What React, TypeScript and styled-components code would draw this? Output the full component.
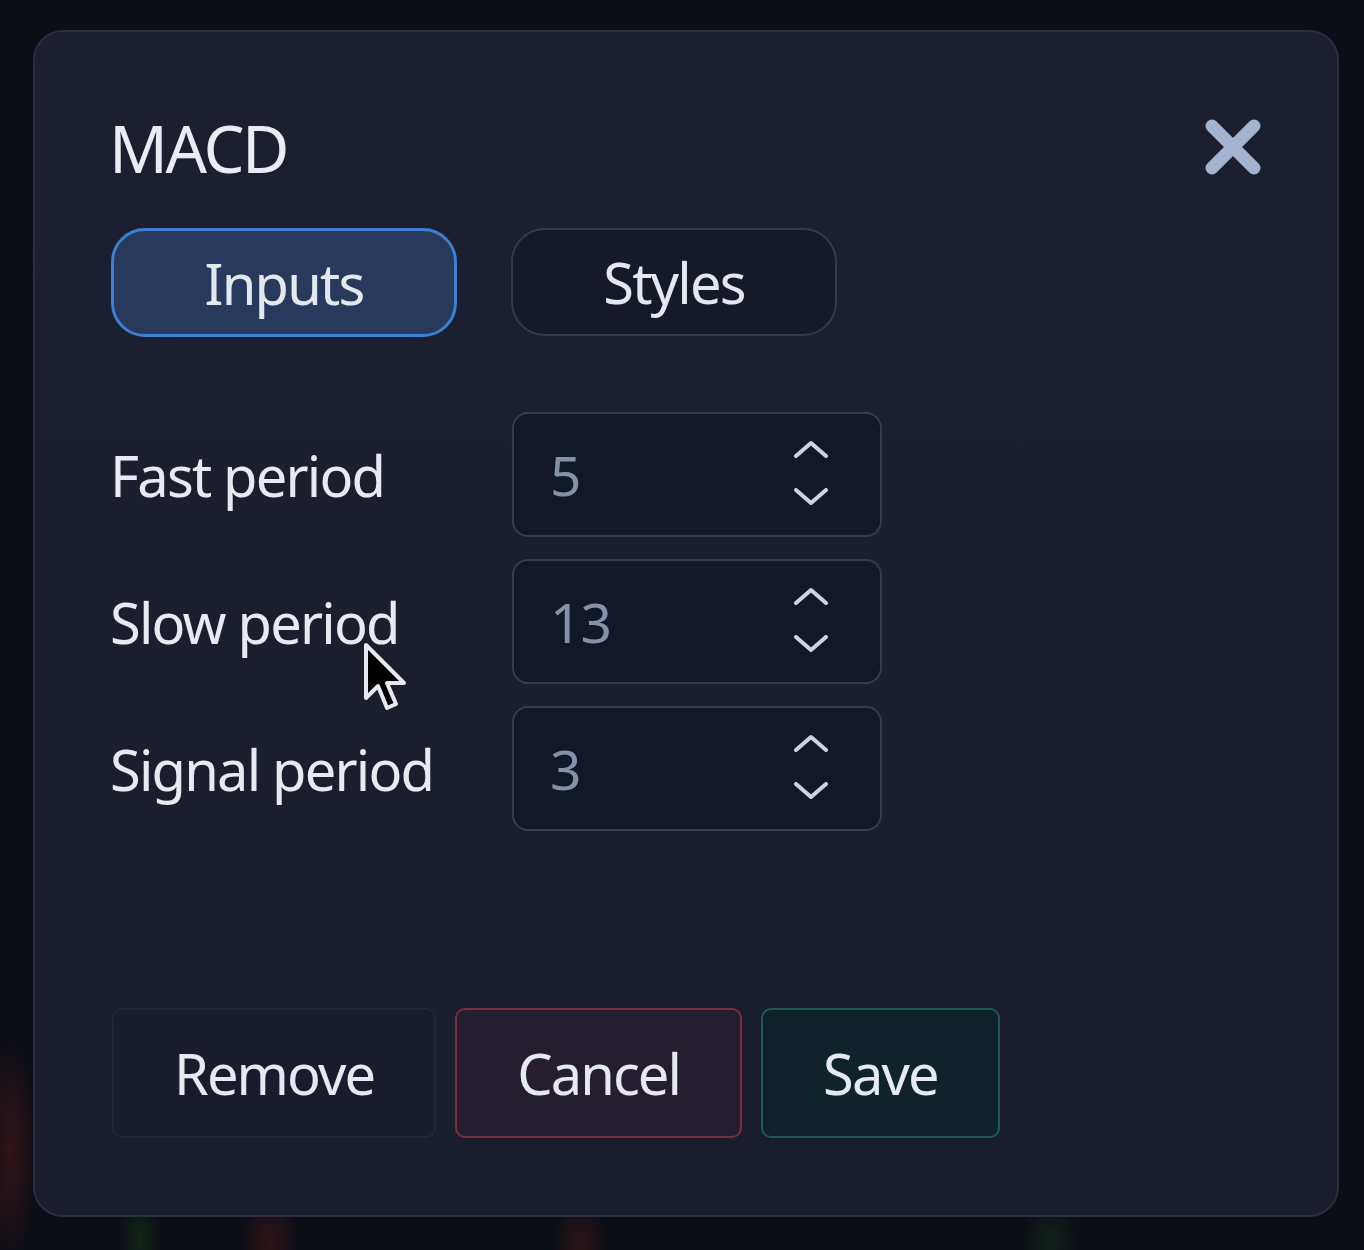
import React from "react";
import styled, { createGlobalStyle } from "styled-components";

const Global = createGlobalStyle`
  html, body { margin: 0; padding: 0; }
  body {
    width: 1364px;
    height: 1250px;
    overflow: hidden;
    background:
      radial-gradient(ellipse 40px 160px at 10px 1150px, rgba(120, 30, 30, 0.35), transparent 70%),
      radial-gradient(ellipse 30px 80px at 140px 1240px, rgba(40, 110, 40, 0.25), transparent 70%),
      radial-gradient(ellipse 40px 80px at 270px 1245px, rgba(130, 35, 30, 0.3), transparent 70%),
      radial-gradient(ellipse 40px 60px at 580px 1245px, rgba(130, 40, 30, 0.25), transparent 70%),
      radial-gradient(ellipse 40px 60px at 1050px 1240px, rgba(40, 110, 40, 0.2), transparent 70%),
      #0c0e15;
    font-family: "Noto Sans", "Open Sans", sans-serif;
  }
`;

const Page = styled.div`
  padding: 30px 0 0 33px;
  position: relative;
`;

const Dialog = styled.div`
  box-sizing: border-box;
  width: 1306px;
  height: 1187px;
  border: 2px solid #2a2e3e;
  border-radius: 30px;
  background: linear-gradient(180deg, #1c1f2f 0%, #1b1e2d 60%, #1a1d2b 100%);
  padding: 76px 75px 77px 74px;
  display: flex;
  flex-direction: column;
`;

const Header = styled.div`
  display: flex;
  justify-content: space-between;
  align-items: flex-start;
  height: 80px;
`;

const Title = styled.h1`
  margin: 0;
  font-size: 65px;
  line-height: 80px;
  font-weight: 400;
  color: #e9ecf2;
  letter-spacing: -2.4px;
`;

const CloseButton = styled.button`
  margin: 8px -2px 0 0;
  padding: 0;
  width: 62px;
  height: 62px;
  border: none;
  background: transparent;
  color: #a4b4d0;
  display: flex;
  align-items: center;
  justify-content: center;
`;

const Tabs = styled.div`
  display: flex;
  gap: 54px;
  margin-top: 40px;
  padding-left: 2px;
`;

const Tab = styled.button<{ $active?: boolean }>`
  box-sizing: border-box;
  height: ${(p) => (p.$active ? "109px" : "108px")};
  width: ${(p) => (p.$active ? "346px" : "326px")};
  border-radius: 34px;
  border: ${(p) => (p.$active ? "3px solid #3d7fd0" : "2px solid #343a4c")};
  background: ${(p) => (p.$active ? "#273a5c" : "#161927")};
  color: #e3e8f0;
  font-family: "Noto Sans", sans-serif;
  font-size: 56px;
  letter-spacing: -1.8px;
  font-weight: 400;
  padding: 0;
  display: flex;
  align-items: center;
  justify-content: center;
`;

const Form = styled.div`
  margin-top: 75px;
  display: grid;
  grid-template-columns: 402px 370px;
  row-gap: 22px;
  align-items: center;
  padding-left: 1px;
`;

const Label = styled.label`
  font-size: 56px;
  color: #e7eaf0;
  line-height: 1;
  letter-spacing: -1.8px;
`;

const NumberBox = styled.div`
  box-sizing: border-box;
  height: 125px;
  border: 2px solid #353c52;
  border-radius: 16px;
  background: #131829;
  display: flex;
  align-items: center;
  justify-content: space-between;
  padding: 0 51px 0 36px;
`;

const Value = styled.span`
  font-size: 55px;
  letter-spacing: -1px;
  color: #8591a8;
`;

const Spinner = styled.div`
  display: flex;
  flex-direction: column;
  gap: 30px;
  margin-top: -4px;
  color: #ccd3de;
`;

const Footer = styled.div`
  margin-top: auto;
  display: flex;
  gap: 19px;
  padding-left: 3px;
`;

const ActionButton = styled.button<{ $tone: "neutral" | "danger" | "success" }>`
  box-sizing: border-box;
  height: 130px;
  padding: 0 60px;
  border-radius: 10px;
  font-family: "Noto Sans", sans-serif;
  font-size: 56px;
  letter-spacing: -1.9px;
  color: #e6e9ef;
  border: 2px solid
    ${(p) =>
      p.$tone === "danger" ? "#7a2f3f" : p.$tone === "success" ? "#1f5a53" : "#212638"};
  background: ${(p) =>
    p.$tone === "danger" ? "#251e2e" : p.$tone === "success" ? "#10222a" : "#181c2c"};
`;

const Cursor = styled.svg`
  position: absolute;
  left: 362px;
  top: 642px;
  pointer-events: none;
`;

const XIcon = () => (
  <svg width="62" height="62" viewBox="0 0 62 62">
    <path d="M10 10 L52 52 M52 10 L10 52" stroke="currentColor" strokeWidth="13" strokeLinecap="round" />
  </svg>
);

const Chevrons = () => (
  <Spinner>
    <svg width="36" height="18" viewBox="0 0 36 18">
      <path d="M3 16 L18 3 L33 16" fill="none" stroke="currentColor" strokeWidth="4" strokeLinecap="round" strokeLinejoin="round" />
    </svg>
    <svg width="36" height="18" viewBox="0 0 36 18">
      <path d="M3 2 L18 15 L33 2" fill="none" stroke="currentColor" strokeWidth="4" strokeLinecap="round" strokeLinejoin="round" />
    </svg>
  </Spinner>
);

const fields = [
  { label: "Fast period", value: "5" },
  { label: "Slow period", value: "13" },
  { label: "Signal period", value: "3" },
];

export default function App() {
  return (
    <Page>
      <Global />
      <Dialog>
        <Header>
          <Title>MACD</Title>
          <CloseButton aria-label="Close">
            <XIcon />
          </CloseButton>
        </Header>
        <Tabs>
          <Tab $active>Inputs</Tab>
          <Tab>Styles</Tab>
        </Tabs>
        <Form>
          {fields.map((f) => (
            <React.Fragment key={f.label}>
              <Label>{f.label}</Label>
              <NumberBox>
                <Value>{f.value}</Value>
                <Chevrons />
              </NumberBox>
            </React.Fragment>
          ))}
        </Form>
        <Footer>
          <ActionButton $tone="neutral">Remove</ActionButton>
          <ActionButton $tone="danger">Cancel</ActionButton>
          <ActionButton $tone="success">Save</ActionButton>
        </Footer>
      </Dialog>
      <Cursor width="48" height="72" viewBox="0 0 48 72">
        <path
          d="M4 3 L4 56 L16 44 L25 66 L34 62 L25 41 L42 41 Z"
          fill="#000"
          stroke="#e8e8ee"
          strokeWidth="4"
          strokeLinejoin="round"
        />
      </Cursor>
    </Page>
  );
}
